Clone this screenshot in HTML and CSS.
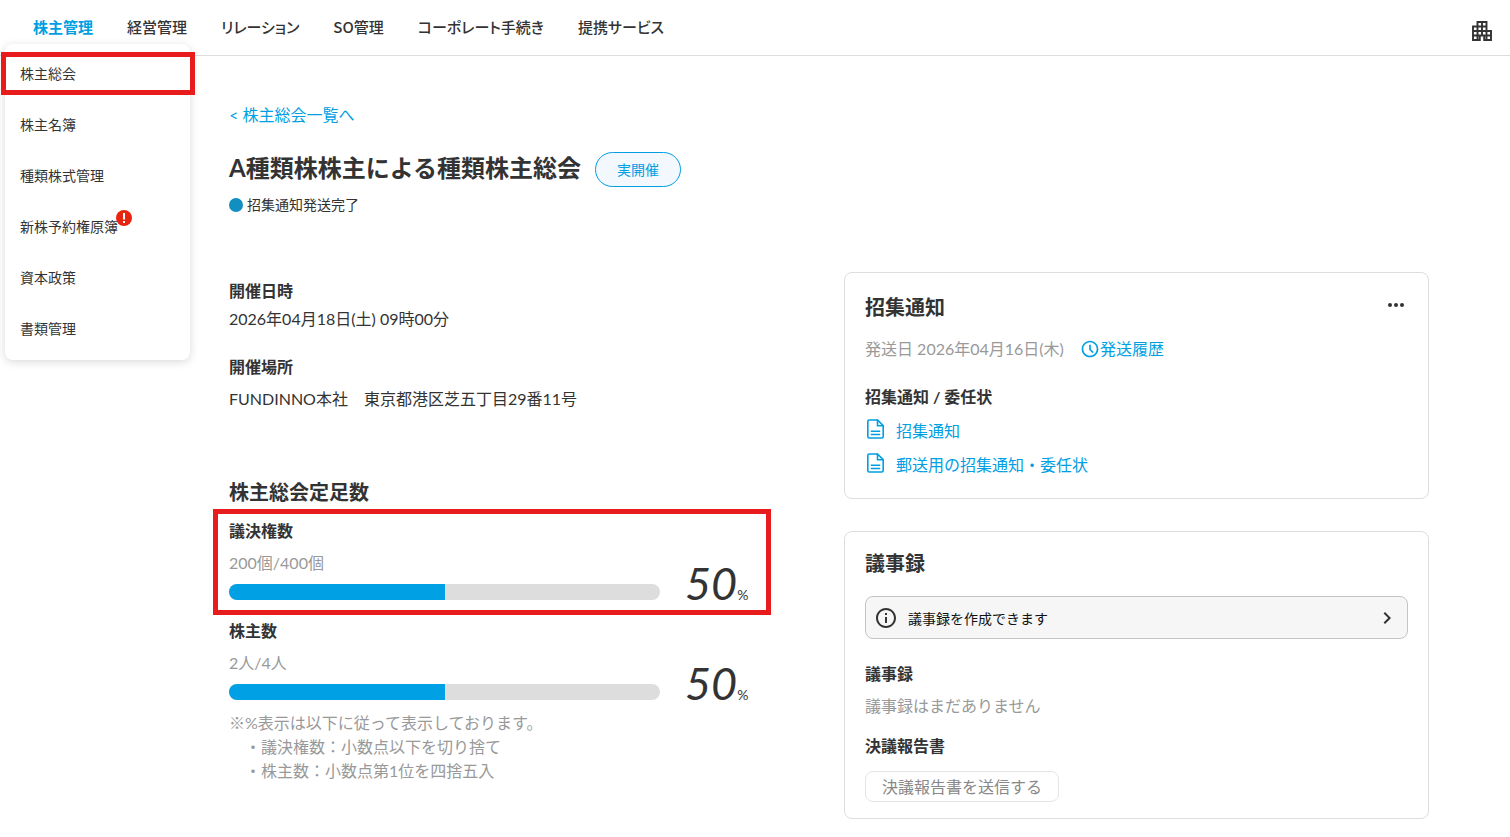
FILE: index.html
```
<!DOCTYPE html>
<html lang="ja">
<head>
  <meta charset="UTF-8">
  <title>A種類株株主による種類株主総会</title>
  <meta name="viewport" content="width=device-width, initial-scale=1.0">
  <link rel="stylesheet" href="styles.css">
</head>
<body>

<header class="header">
  <nav class="global-nav">
    <a href="#" class="current">株主管理</a>
    <a href="#">経営管理</a>
    <a href="#">リレーション</a>
    <a href="#">SO管理</a>
    <a href="#">コーポレート手続き</a>
    <a href="#">提携サービス</a>
  </nav>
  <button class="icon-button" type="button" aria-label="会社選択">
    <svg class="line bold" width="20" height="20" viewBox="0 0 20 20"><path d="M5.500 1h9v9H19v9h-6.800v-4.500H7.800V19H1V5.500h4.500zM5.500 5.500h9M10 1v13.500M5.500 5.500V19M1 10h13.500M1 14.500h18M14.500 10v9"/></svg>
  </button>

  <!-- 株主管理のドロップダウン -->
  <ul class="sub-menu">
    <li class="marked"><a href="#">株主総会</a></li>
    <li><a href="#">株主名簿</a></li>
    <li><a href="#">種類株式管理</a></li>
    <li>
      <a href="#">新株予約権原簿<svg class="alert" width="16" height="16" viewBox="0 0 16 16"><circle cx="8" cy="8" r="8" fill="#e6240f"/><path d="M7 3h2v6.500H7zM7 11h2v2H7z" fill="#fff"/></svg></a>
    </li>
    <li><a href="#">資本政策</a></li>
    <li><a href="#">書類管理</a></li>
  </ul>
</header>

<main class="main">
  <a href="#" class="back">&lt; 株主総会一覧へ</a>
  <div class="title-row">
    <h1>A種類株株主による種類株主総会</h1>
    <span class="pill">実開催</span>
  </div>
  <p class="status">招集通知発送完了</p>

  <div class="columns">
    <div class="overview">
      <dl class="info">
        <dt>開催日時</dt>
        <dd>2026年04月18日(土) 09時00分</dd>
        <dt>開催場所</dt>
        <dd class="place">FUNDINNO本社　東京都港区芝五丁目29番11号</dd>
      </dl>

      <h2>株主総会定足数</h2>
      <section class="meter marked">
        <h3>議決権数</h3>
        <label class="count" for="votes">200個/400個</label>
        <progress id="votes" value="200" max="400"></progress>
        <p class="rate"><em>50</em>%</p>
      </section>
      <section class="meter">
        <h3>株主数</h3>
        <label class="count" for="holders">2人/4人</label>
        <progress id="holders" value="2" max="4"></progress>
        <p class="rate"><em>50</em>%</p>
      </section>

      <div class="notes">
        <p>※%表示は以下に従って表示しております。</p>
        <ul>
          <li>・議決権数：小数点以下を切り捨て</li>
          <li>・株主数：小数点第1位を四捨五入</li>
        </ul>
      </div>
    </div>

    <div class="cards">
      <section class="card">
        <div class="card-head">
          <h2>招集通知</h2>
          <button class="icon-button" type="button" aria-label="メニュー">
            <svg width="24" height="24" viewBox="0 0 24 24"><circle cx="6" cy="12" r="2"/><circle cx="12" cy="12" r="2"/><circle cx="18" cy="12" r="2"/></svg>
          </button>
        </div>
        <div class="sent">
          <span>発送日 2026年04月16日(木)</span>
          <a href="#">
            <svg width="20" height="20" viewBox="0 0 24 24"><path d="M11.990 2C6.470 2 2 6.480 2 12s4.470 10 9.990 10C17.520 22 22 17.520 22 12S17.520 2 11.990 2zM12 20c-4.420 0-8-3.580-8-8s3.580-8 8-8 8 3.580 8 8-3.580 8-8 8zM13 7h-2v6l4.200 4 1.300-1.400L13 12.300z"/></svg>発送履歴
          </a>
        </div>
        <h3>招集通知 / 委任状</h3>
        <ul class="files">
          <li><a href="#"><svg class="line" width="20" height="20" viewBox="0 0 20 20"><path d="M12.500 1H4.300Q2.800 1 2.800 2.500v15Q2.800 19 4.300 19h12.400q1.500 0 1.500-1.500V6.700L12.500 1v5.700h5.700M5.800 12.200h9.400M5.800 15.500h9.400"/></svg>招集通知</a></li>
          <li><a href="#"><svg class="line" width="20" height="20" viewBox="0 0 20 20"><path d="M12.500 1H4.300Q2.800 1 2.800 2.500v15Q2.800 19 4.300 19h12.400q1.500 0 1.500-1.500V6.700L12.500 1v5.700h5.700M5.800 12.200h9.400M5.800 15.500h9.400"/></svg>郵送用の招集通知・委任状</a></li>
        </ul>
      </section>

      <section class="card">
        <h2>議事録</h2>
        <button class="notice" type="button">
          <svg width="24" height="24" viewBox="0 0 24 24"><path d="M11 7h2v2h-2zm0 4h2v6h-2zm1-9C6.480 2 2 6.480 2 12s4.480 10 10 10 10-4.480 10-10S17.520 2 12 2zm0 18c-4.410 0-8-3.590-8-8s3.590-8 8-8 8 3.590 8 8-3.590 8-8 8z"/></svg>
          <span>議事録を作成できます</span>
          <svg width="24" height="24" viewBox="0 0 24 24"><path d="M8.590 16.590 13.170 12 8.590 7.410 10 6l6 6-6 6z"/></svg>
        </button>
        <h3>議事録</h3>
        <p class="empty">議事録はまだありません</p>
        <h3>決議報告書</h3>
        <button class="send" type="button" disabled>決議報告書を送信する</button>
      </section>
    </div>
  </div>
</main>

</body>
</html>
```
FILE: styles.css
```
* {
  box-sizing: border-box;
}

body {
  margin: 0;
  background: #fff;
  color: #333;
  font-family: Lato, "Noto Sans CJK JP", sans-serif;
  font-size: 16px;
  line-height: 24px;
}

h1, h2, h3, p, ul, dl, dd {
  margin: 0;
  padding: 0;
}

ul {
  list-style: none;
}

a {
  color: #009fe3;
  text-decoration: none;
}

button {
  font-family: inherit;
  cursor: pointer;
}

svg {
  display: block;
  flex: none;
  fill: currentColor;
}

.line {
  fill: none;
  stroke: currentColor;
  stroke-width: 1.6;
}

.line.bold {
  stroke-width: 1.9;
}

h2 {
  font-size: 20px;
  line-height: 32px;
}

h3 {
  font-size: 16px;
  line-height: 24px;
}

.icon-button {
  padding: 0;
  border: none;
  background: none;
  color: #333;
}

/* ヘッダー */
.header {
  position: relative;
  display: flex;
  align-items: center;
  justify-content: space-between;
  height: 56px;
  padding: 0 18px 0 33px;
  border-bottom: 1px solid #ddd;
}

.header > .icon-button {
  padding-top: 7px;
}

.global-nav {
  display: flex;
  gap: 34px;
  padding-bottom: 2px;
  font-size: 15px;
  font-weight: 500;
  font-family: "Noto Sans CJK JP", sans-serif;
  font-feature-settings: "palt";
}

.global-nav a {
  color: #333;
}

.global-nav .current {
  color: #009fe3;
  font-weight: 700;
}

.sub-menu {
  position: absolute;
  top: 44px;
  left: 5px;
  z-index: 10;
  width: 185px;
  padding: 4px 0 6px;
  border-radius: 8px;
  background: #fff;
  box-shadow: 0 2px 10px rgba(0, 0, 0, 0.15);
  font-size: 14px;
}

.sub-menu a {
  display: block;
  padding: 0 15px;
  color: #333;
  line-height: 51px;
}

.sub-menu li {
  position: relative;
}

.alert {
  position: absolute;
  top: 9px;
  left: 111px;
}

/* 赤枠 */
.marked::after {
  content: "";
  position: absolute;
  inset: -10px -16px -15px;
  border: 5px solid #e81c1c;
  pointer-events: none;
}

.sub-menu .marked::after {
  inset: 4px -5px 4px -4px;
}

/* 本文 */
.main {
  padding: 47px 81px 17px 229px;
}

.back {
  display: block;
}

.title-row {
  display: flex;
  align-items: center;
  gap: 14px;
  margin-top: 25px;
}

h1 {
  padding-bottom: 3px;
  font-size: 24px;
  line-height: 32px;
}

.pill {
  padding: 4px 21px;
  border: 1px solid #009fe3;
  border-radius: 18px;
  background: #f2f8fd;
  color: #009fe3;
  font-size: 14px;
  line-height: 25px;
}

.status {
  display: flex;
  align-items: center;
  gap: 4px;
  margin-top: 6px;
  font-size: 14px;
}

.status::before {
  content: "";
  width: 14px;
  height: 14px;
  border-radius: 50%;
  background: #118fc0;
}

.columns {
  display: grid;
  grid-template-columns: 1fr 1fr;
  align-items: start;
  gap: 30px;
  margin-top: 55px;
}

.overview {
  padding-top: 7px;
}

.info {
  margin-bottom: 65px;
}

.info dt {
  font-weight: 700;
}

.info dd {
  margin: 4px 0 24px;
}

.info .place {
  margin: 8px 0 0;
}

.meter {
  position: relative;
  display: grid;
  grid-template-columns: 1fr 70px;
  column-gap: 25px;
  max-width: 526px;
  margin-top: 19px;
}

h2 + .meter {
  margin-top: 11px;
}

.meter h3,
.count {
  grid-column: 1;
}

.count {
  margin-top: 8px;
  color: #999;
}

.meter progress {
  grid-column: 1;
  width: 100%;
  height: 16px;
  margin-top: 9px;
  border: none;
  border-radius: 8px;
  background: #ddd;
  overflow: hidden;
  appearance: none;
}

.meter progress::-webkit-progress-bar {
  background: #ddd;
}

.meter progress::-webkit-progress-value {
  background: #00a0e4;
}

.rate {
  grid-column: 2;
  grid-row: 2 / 4;
  align-self: end;
  font-size: 14px;
  line-height: 10px;
  white-space: nowrap;
}

.rate em {
  font-size: 45px;
}

.notes {
  margin-top: 11px;
  color: #999;
}

.notes ul {
  padding-left: 16px;
}

/* カード */
.card {
  padding: 15px 20px 16px;
  border: 1px solid #ddd;
  border-radius: 8px;
}

.card + .card {
  margin-top: 32px;
}

.card-head {
  display: flex;
  align-items: center;
  justify-content: space-between;
  min-height: 38px;
}

.card-head .icon-button {
  padding-bottom: 4px;
}

.sent {
  display: flex;
  gap: 16px;
  margin: 11px 0 24px;
  color: #999;
}

.sent a {
  display: flex;
  align-items: center;
}

.files {
  margin-top: 5px;
}

.files a {
  display: flex;
  align-items: center;
  gap: 11px;
  height: 34px;
}

.files svg {
  margin-bottom: 4px;
}

.notice {
  display: flex;
  align-items: center;
  gap: 10px;
  width: 100%;
  height: 43px;
  margin: 17px 0 23px;
  padding: 0 8px;
  border: 1px solid #c4c4c4;
  border-radius: 8px;
  background: #f6f6f6;
  color: #333;
  font-size: 14px;
  text-align: left;
}

.notice span {
  flex: 1;
  color: #111;
}

.empty {
  margin: 8px 0 16px;
  color: #999;
}

.send {
  display: block;
  height: 31px;
  margin-top: 13px;
  padding: 0 16px;
  border: 1px solid #e5e5e5;
  border-radius: 8px;
  background: #fff;
  color: #888;
  font-size: 16px;
  line-height: 24px;
  cursor: default;
}
```
